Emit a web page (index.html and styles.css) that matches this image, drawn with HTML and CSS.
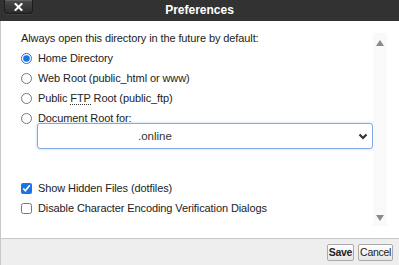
FILE: index.html
```html
<!DOCTYPE html>
<html>
<head>
<meta charset="utf-8">
<link rel="stylesheet" href="styles.css">
</head>
<body>
<div class="dialog">
  <div class="titlebar">
    <div class="tb-left">
      <button class="close" type="button" aria-label="Close">
        <svg width="9" height="8" viewBox="0 0 9 8"><path d="M1.5 1 L7.5 7 M7.5 1 L1.5 7" stroke="#fff" stroke-width="2" stroke-linecap="square"/></svg>
      </button>
    </div>
    <div class="title">Preferences</div>
    <div></div>
  </div>
  <div class="content">
    <div class="main">
      <div class="heading">Always open this directory in the future by default:</div>
      <label class="row"><input type="radio" name="dir" checked><span>Home Directory</span></label>
      <label class="row"><input type="radio" name="dir"><span>Web Root (public_html or www)</span></label>
      <label class="row"><input type="radio" name="dir"><span>Public <abbr>FTP</abbr> Root (public_ftp)</span></label>
      <label class="row last"><input type="radio" name="dir"><span>Document Root for:</span></label>
      <div class="select">
        <span class="select-text">.online</span>
        <svg class="chev" width="10" height="7" viewBox="0 0 10 7"><path d="M1.5 1.5 L5 5 L8.5 1.5" fill="none" stroke="#333" stroke-width="2.2"/></svg>
      </div>
      <label class="row check first"><input type="checkbox" checked><span>Show Hidden Files (dotfiles)</span></label>
      <label class="row check"><input type="checkbox"><span>Disable Character Encoding Verification Dialogs</span></label>
    </div>
    <div class="scrollbar">
      <span class="arrow up"></span>
      <span class="arrow down"></span>
    </div>
    <div class="gutter"></div>
  </div>
  <div class="footer">
    <button class="btn save" type="button">Save</button>
    <button class="btn" type="button">Cancel</button>
  </div>
</div>
</body>
</html>
```
FILE: styles.css
```css
html, body {
  margin: 0;
  padding: 0;
  background: #fff;
}
body {
  font-family: "Liberation Sans", Arial, sans-serif;
  font-size: 11px;
  color: #222;
}
.dialog {
  width: 399px;
  height: 265px;
  display: flex;
  flex-direction: column;
  overflow: hidden;
}
.titlebar {
  height: 21px;
  background: #323232;
  display: grid;
  grid-template-columns: 1fr auto 1fr;
  align-items: start;
  flex: none;
}
.tb-left {
  padding-left: 4px;
}
.close {
  width: 29px;
  height: 14px;
  margin: 0;
  padding: 0;
  border: 1px solid #1c1c1c;
  border-top: none;
  border-radius: 0 0 4px 4px;
  background: linear-gradient(#4a4a4a, #2c2c2c);
  box-shadow: inset 0 1px 0 rgba(255,255,255,0.12), 0 1px 1px rgba(255,255,255,0.08);
  display: flex;
  align-items: center;
  justify-content: center;
}
.title {
  color: #fff;
  font-weight: bold;
  font-size: 12px;
  line-height: 20px;
}
.content {
  flex: 1;
  display: flex;
  border-left: 1px solid #c8c8c8;
  min-height: 0;
}
.main {
  flex: 1;
  padding: 10px 0 0 20px;
  display: flex;
  flex-direction: column;
}
.heading {
  line-height: 14px;
  margin-bottom: 7px;
  letter-spacing: -0.1px;
}
.row {
  display: flex;
  align-items: center;
  height: 12px;
  margin-bottom: 8px;
  line-height: 12px;
  letter-spacing: -0.1px;
}
.row.last {
  margin-bottom: 0;
}
.row input {
  margin: 0 6px 0 0;
  width: 11px;
  height: 11px;
  accent-color: #1a73e8;
  flex: none;
}
abbr {
  text-decoration: none;
  border-bottom: 1px dotted #333;
  line-height: 10px;
}
.select {
  margin: -1px 0 0 16px;
  height: 24px;
  border: 1px solid #7ea9e1;
  border-radius: 3px;
  box-shadow: 0 0 3px rgba(102,150,230,0.45);
  display: flex;
  align-items: center;
  justify-content: space-between;
  padding: 0 4px 0 100px;
  font-size: 11.5px;
  color: #333;
}
.chev {
  display: block;
}
.row.first {
  margin-top: 33px;
}
.scrollbar {
  width: 14px;
  margin-top: 12px;
  margin-bottom: 12px;
  background: #f9f9f9;
  display: flex;
  flex-direction: column;
  justify-content: space-between;
  align-items: center;
  padding: 7px 0 5px;
  box-sizing: border-box;
  flex: none;
}
.arrow {
  width: 0;
  height: 0;
  border-left: 4px solid transparent;
  border-right: 4px solid transparent;
}
.arrow.up {
  border-bottom: 6px solid #8a8a8a;
}
.arrow.down {
  border-top: 6px solid #8a8a8a;
}
.gutter {
  width: 12px;
  flex: none;
}
.footer {
  height: 26px;
  flex: none;
  background: #eeeeee;
  border-top: 1px solid #c8c8c8;
  border-left: 1px solid #c8c8c8;
  display: flex;
  justify-content: flex-end;
  align-items: center;
  gap: 4px;
  padding-right: 6px;
}
.btn {
  height: 17px;
  margin: 0;
  padding: 0 1px;
  font-family: "Liberation Sans", Arial, sans-serif;
  font-size: 10.5px;
  letter-spacing: -0.3px;
  color: #222;
  background: linear-gradient(#ffffff, #e6e6e6);
  border: 1px solid #a9a9a9;
  border-radius: 2px;
  line-height: 15px;
}
.btn.save {
  font-weight: bold;
}
```
